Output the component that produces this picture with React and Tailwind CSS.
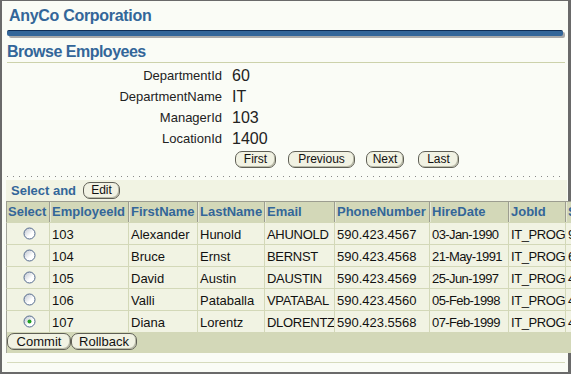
import React from 'react';

const department = [
  ['DepartmentId', '60'],
  ['DepartmentName', 'IT'],
  ['ManagerId', '103'],
  ['LocationId', '1400'],
];

const employees = [
  { id: 103, first: 'Alexander', last: 'Hunold', email: 'AHUNOLD', phone: '590.423.4567', hired: '03-Jan-1990', job: 'IT_PROG', salary: '9000' },
  { id: 104, first: 'Bruce', last: 'Ernst', email: 'BERNST', phone: '590.423.4568', hired: '21-May-1991', job: 'IT_PROG', salary: '6000' },
  { id: 105, first: 'David', last: 'Austin', email: 'DAUSTIN', phone: '590.423.4569', hired: '25-Jun-1997', job: 'IT_PROG', salary: '4800' },
  { id: 106, first: 'Valli', last: 'Pataballa', email: 'VPATABAL', phone: '590.423.4560', hired: '05-Feb-1998', job: 'IT_PROG', salary: '4800' },
  { id: 107, first: 'Diana', last: 'Lorentz', email: 'DLORENTZ', phone: '590.423.5568', hired: '07-Feb-1999', job: 'IT_PROG', salary: '4200' },
];

const columns = ['EmployeeId', 'FirstName', 'LastName', 'Email', 'PhoneNumber', 'HireDate', 'JobId', 'Salary'];

// Spalten mit engerer Schrift, damit der Text wie im Original in die Zelle passt
const tightCols = { 3: 'tracking-[-0.3px]', 5: 'tracking-[-0.6px]', 6: 'tracking-[-0.4px]' };

function Btn({ children, className = '' }) {
  return (
    <button
      className={`h-[17px] rounded-[7px] border border-[#5f5f55] bg-[#f1f2e3] text-center leading-[15px] text-[#111] shadow-[inset_-1px_-1px_0_#b9baa8] ${className}`}
    >
      {children}
    </button>
  );
}

function Radio({ checked }) {
  return (
    <svg width="13" height="13" viewBox="0 0 13 13">
      <defs>
        <linearGradient id="radioFill" x1="0" y1="0" x2="1" y2="1">
          <stop offset="0" stopColor="#b9c0cc" />
          <stop offset="0.6" stopColor="#ffffff" />
        </linearGradient>
      </defs>
      <circle cx="6.5" cy="6.5" r="5.5" fill="url(#radioFill)" stroke="#53698c" strokeWidth="1" />
      {checked && <circle cx="6.5" cy="6.5" r="2" fill="#22a022" />}
    </svg>
  );
}

export default function App() {
  return (
    <div className="w-[571px] h-[374px] overflow-hidden bg-[#fafcf6] font-['Liberation_Sans',Arial,sans-serif]">
      <div className="h-[374px] border-t border-l-2 border-r-[3px] border-b-2 border-[#6a6a6a]">
        {/* Titel */}
        <div className="pl-[7px] pt-[5px] text-[16px] leading-[20px] font-bold tracking-[-0.3px] text-[#336699]">
          AnyCo Corporation
        </div>
        <div className="mt-[4px] ml-[5px] h-[6px] w-[556px] rounded-[2px] border-t border-[#0f2d55] bg-[#336699] shadow-[2px_2px_0_#a9a9a9]"></div>

        <div className="mt-[6px] ml-[5px] w-[558px] border-b border-[#ccd2ab] text-[16px] leading-[20px] font-bold tracking-[-0.5px] text-[#336699]">
          Browse Employees
        </div>

        {/* Abteilung */}
        <div className="mt-[2px] grid grid-cols-[220px_1fr] gap-x-[10px] text-[#222]">
          {department.map(([label, value]) => (
            <React.Fragment key={label}>
              <div className="text-right text-[13px] leading-[21px]">{label}</div>
              <div className="text-[16px] leading-[21px]">{value}</div>
            </React.Fragment>
          ))}
          <div className="col-start-2 mt-[2px] flex pl-[3px] text-[12px]">
            <Btn className="w-[41px]">First</Btn>
            <Btn className="ml-[12px] w-[67px]">Previous</Btn>
            <Btn className="ml-[11px] w-[38px]">Next</Btn>
            <Btn className="ml-[14px] w-[41px]">Last</Btn>
          </div>
        </div>

        <div className="mt-[8px] ml-[5px] h-px w-[558px] bg-[linear-gradient(to_right,#8a8a8a_1px,transparent_1px)] bg-[length:6px_1px]"></div>

        {/* Tabelle */}
        <div className="mt-[3px] ml-[4px]">
          <div className="flex h-[21px] w-[561px] items-center bg-[#f1f3e3] pl-[5px]">
            <span className="text-[13px] font-bold text-[#336699]">Select and</span>
            <Btn className="ml-[7px] w-[37px] text-[12px]">Edit</Btn>
          </div>
          <div className="w-[620px]">
            <table className="table-fixed w-[620px] border-separate border-spacing-0 text-[13px] text-[#111]">
              <colgroup>
                <col className="w-[43px]" />
                <col className="w-[79px]" />
                <col className="w-[69px]" />
                <col className="w-[67px]" />
                <col className="w-[70px]" />
                <col className="w-[95px]" />
                <col className="w-[79px]" />
                <col className="w-[57px]" />
                <col className="w-[61px]" />
              </colgroup>
              <thead>
                <tr>
                  <th className="h-[21px] border-t border-l border-[#9c9d90] bg-[#d3d8b8] px-[1px] text-left text-[13px] leading-[20px] font-bold text-[#336699]">
                    Select
                  </th>
                  {columns.map((c) => (
                    <th
                      key={c}
                      className="h-[21px] border-t border-l border-[#9c9d90] bg-[#d3d8b8] pl-[2px] text-left text-[13px] leading-[20px] font-bold whitespace-nowrap overflow-hidden text-[#336699] shadow-[inset_1px_0_0_#e6e9d6]"
                    >
                      {c}
                    </th>
                  ))}
                </tr>
              </thead>
              <tbody>
                {employees.map((e) => {
                  const cells = [e.id, e.first, e.last, e.email, e.phone, e.hired, e.job, e.salary];
                  return (
                    <tr key={e.id}>
                      <td className="h-[22px] border-t border-l border-t-[#d3d8b8] border-l-[#a3a49a] bg-[#f1f3e3] p-0">
                        <div className="flex justify-center pl-[3px]">
                          <Radio checked={e.id === 107} />
                        </div>
                      </td>
                      {cells.map((v, i) => (
                        <td
                          key={i}
                          className={`h-[22px] border-t border-l border-[#d3d8b8] bg-[#f1f3e3] px-[2px] pt-[2px] text-[13px] leading-[19px] whitespace-nowrap overflow-hidden ${tightCols[i] || ''}`}
                        >
                          {v}
                        </td>
                      ))}
                    </tr>
                  );
                })}
              </tbody>
            </table>
            <div className="flex h-[21px] border-l border-[#a3a49a] bg-[#d3d8b8] pt-[1px] text-[13px]">
              <Btn className="w-[64px]">Commit</Btn>
              <Btn className="w-[66px]">Rollback</Btn>
            </div>
          </div>
        </div>

        <div className="mt-[9px] ml-[5px] h-px w-[558px] bg-[#d6dbbd]"></div>
      </div>
    </div>
  );
}
